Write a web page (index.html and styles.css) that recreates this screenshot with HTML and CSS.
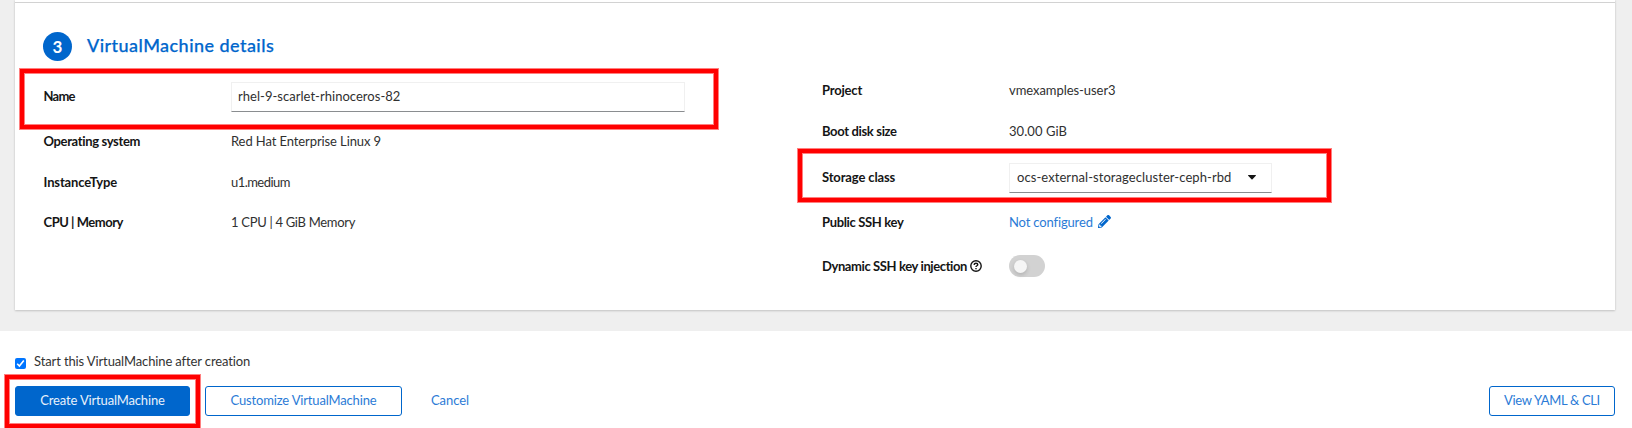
FILE: index.html
```html
<!DOCTYPE html>
<html lang="en">
<head>
<meta charset="utf-8">
<title>VirtualMachine details</title>
<link rel="stylesheet" href="styles.css">
</head>
<body>
<main class="catalog">
  <section class="card">
    <header class="section-head">
      <span class="step">3</span>
      <h2 class="section-title">VirtualMachine details</h2>
    </header>
    <div class="details">
      <dl class="column column-left">
        <div class="row row-name"><dt class="t-name">Name</dt><dd><input class="text-input" type="text" value="rhel-9-scarlet-rhinoceros-82" aria-label="Name"></dd></div>
        <div class="row row-os"><dt class="t-os">Operating system</dt><dd class="v-os">Red Hat Enterprise Linux 9</dd></div>
        <div class="row row-type"><dt class="t-type">InstanceType</dt><dd class="v-type">u1.medium</dd></div>
        <div class="row row-cpu"><dt class="t-cpu">CPU | Memory</dt><dd class="v-cpu">1 CPU | 4 GiB Memory</dd></div>
      </dl>
      <dl class="column column-right">
        <div class="row"><dt class="t-project">Project</dt><dd class="v-project">vmexamples-user3</dd></div>
        <div class="row row-boot"><dt class="t-os">Boot disk size</dt><dd class="v-boot">30.00 GiB</dd></div>
        <div class="row row-storage"><dt class="t-type">Storage class</dt><dd><button class="select" type="button"><span>ocs-external-storagecluster-ceph-rbd</span><svg class="caret" viewBox="0 0 8 5"><path d="M.5 0h7q.8.1.3.7L4.500 4.300Q4 4.800 3.500 4.300L.2.700Q-.3.100.5 0z"/></svg></button></dd></div>
        <div class="row row-ssh"><dt class="t-os">Public SSH key</dt><dd><a class="edit"><span>Not configured</span><svg class="pencil" viewBox="0 0 512 512"><path d="M497.900 142.100l-46.100 46.100c-4.700 4.700-12.300 4.700-17 0l-111-111c-4.700-4.700-4.700-12.300 0-17l46.100-46.100c18.700-18.700 49.100-18.700 67.900 0l60.100 60.100c18.800 18.700 18.800 49.100 0 67.900zM284.200 99.800L21.600 362.400.4 483.900c-2.900 16.400 11.400 30.600 27.800 27.800l121.500-21.300 262.600-262.600c4.700-4.700 4.700-12.300 0-17l-111-111c-4.800-4.700-12.400-4.700-17.100 0zM124.100 339.900c-5.500-5.500-5.500-14.300 0-19.800l154-154c5.500-5.500 14.300-5.500 19.800 0s5.500 14.300 0 19.800l-154 154c-5.500 5.500-14.300 5.500-19.800 0zM88 424h48v36.300l-64.500 11.300-31.100-31.100L51.700 376H88v48z"/></svg></a></dd></div>
        <div class="row row-inject"><dt class="t-inject"><span>Dynamic SSH key injection</span><svg class="help" viewBox="0 0 12 12"><circle cx="6" cy="6" r="5.200"/><path d="M4.200 4.900C4.200 3.700 5 3.200 6 3.200s1.800.6 1.800 1.500C7.800 5.800 6 5.700 6 7"/><path d="M6 8v1.300"/></svg></dt><dd><span class="toggle"><span class="knob"></span></span></dd></div>
      </dl>
    </div>
  </section>
</main>
<footer class="footer">
  <label class="start"><span class="checkbox"><svg viewBox="0 0 11 11"><path d="M2.200 5.700l2.200 2.300 4.400-5.500"/></svg></span><span>Start this VirtualMachine after creation</span></label>
  <div class="actions">
    <button class="btn primary" type="button">Create VirtualMachine</button>
    <button class="btn customize" type="button">Customize VirtualMachine</button>
    <button class="btn link" type="button">Cancel</button>
    <button class="btn yaml" type="button">View YAML &amp; CLI</button>
  </div>
</footer>
<div class="highlight highlight-name"></div>
<div class="highlight highlight-storage"></div>
<div class="highlight highlight-create"></div>
</body>
</html>
```
FILE: styles.css
```css
* { box-sizing: border-box; }
body {
  position: relative;
  margin: 0;
  width: 1632px;
  height: 428px;
  overflow: hidden;
  background: #fff;
  color: #303030;
  font: 13px/20px Lato, "Open Sans", sans-serif;
}
button, input { font: inherit; color: inherit; margin: 0; border-radius: 0; outline: 0; }
.catalog { height: 331px; padding: 0 17px 0 15px; background: #efefef; }
.card {
  height: 310px;
  padding-top: 2px;
  background: #fff;
  box-shadow: 0 1px 2px rgba(3, 3, 3, .16), 0 0 2px rgba(3, 3, 3, .08);
}
.section-head {
  display: flex;
  align-items: flex-start;
  gap: 15px;
  height: 78px;
  padding: 29px 28px 0;
  border-top: 1px solid #d2d2d2;
}
.step {
  width: 29px;
  height: 29px;
  border-radius: 50%;
  background: #06c;
  color: #fff;
  font-size: 17px;
  font-weight: 700;
  line-height: 29px;
  text-align: center;
}
.section-title {
  margin: 0;
  color: #06c;
  font-size: 18px;
  font-weight: 500;
  line-height: 26px;
  letter-spacing: .45px;
  -webkit-text-stroke: .25px #06c;
}
.details { display: grid; grid-template-columns: 778px 1fr; padding-left: 29px; }
.column { margin: 0; }
.column-left { padding-top: 2px; }
.row { display: grid; grid-template-columns: 187px 1fr; align-items: center; height: 20px; white-space: nowrap; }
.column-left dt { text-indent: -.5px; }
dt { color: #151515; font-weight: 700; }
dd { margin: 0; }
.row-name { height: 30px; }
.row-name dt, .row-storage dt { padding-bottom: 2px; }
.row-os { margin-top: 19px; }
.row-type { margin-top: 21px; }
.row-cpu { margin-top: 20px; }
.row-boot { margin-top: 21px; }
.row-storage { height: 30px; margin-top: 22px; }
.row-ssh { margin-top: 19px; }
.row-inject { height: 22px; margin-top: 23px; }
.t-name { letter-spacing: -.75px; }
.t-os { letter-spacing: -.35px; }
.t-type { letter-spacing: -.13px; }
.t-cpu { letter-spacing: -.47px; }
.t-project { letter-spacing: -.2px; }
.t-inject { display: flex; align-items: center; gap: 3px; letter-spacing: -.39px; }
.v-os { letter-spacing: -.1px; }
.v-type { letter-spacing: -.55px; }
.v-cpu { letter-spacing: -.3px; }
.v-project { letter-spacing: -.06px; }
.v-boot { letter-spacing: .06px; }
.text-input, .select {
  display: flex;
  height: 30px;
  padding: 0 6px 2px;
  border: 1px solid #f0f0f0;
  border-bottom-color: #8a8d90;
  background: #fff;
}
.text-input { width: 454px; letter-spacing: .03px; }
.select { align-items: center; justify-content: space-between; width: 263px; padding-left: 7px; padding-right: 15px; letter-spacing: .07px; }
.caret { width: 8px; height: 5px; fill: #151515; }
.edit { display: flex; gap: 5px; color: #2b7bd6; letter-spacing: -.15px; }
.pencil { width: 13px; height: 13px; margin-top: 3px; fill: #06c; }
.help { width: 12px; height: 12px; fill: none; stroke: #151515; stroke-width: 1.4; }
.toggle { display: flex; align-items: center; width: 36px; height: 22px; padding-left: 5px; border-radius: 11px; background: #d2d2d2; }
.knob { width: 13px; height: 13px; border-radius: 50%; background: #f5f5f5; box-shadow: 0 2px 4px rgba(3, 3, 3, .16); }
.footer { padding: 20px 17px 0 15px; }
.start { display: flex; gap: 8px; height: 35px; letter-spacing: -.12px; color: #333; }
.checkbox { display: flex; width: 11px; height: 11px; margin-top: 7px; border-radius: 2px; background: #0075ff; }
.checkbox svg { width: 11px; height: 11px; fill: none; stroke: #fff; stroke-width: 1.6; }
.actions { display: flex; }
.btn { height: 30px; padding: 0 0 2px; border: 1px solid #06c; border-radius: 3px; background: #fff; color: #2b7bd6; letter-spacing: -.16px; }
.primary { width: 175px; background: #06c; color: #e8f1fb; }
.customize { width: 197px; margin-left: 15px; }
.link { margin-left: 28px; border-color: transparent; letter-spacing: -.07px; }
.yaml { width: 126px; margin-left: auto; letter-spacing: -.33px; }
.highlight {
  position: absolute;
  border: 4px solid #f00;
  box-shadow: 0 0 0 1px rgba(255, 0, 0, .5), inset 0 0 0 1px rgba(255, 0, 0, .5);
  pointer-events: none;
}
.highlight-name { left: 20px; top: 69px; width: 698px; height: 60px; }
.highlight-storage { left: 798px; top: 149px; width: 533px; height: 53px; }
.highlight-create { left: 5px; top: 375px; width: 195px; height: 53px; }
```
